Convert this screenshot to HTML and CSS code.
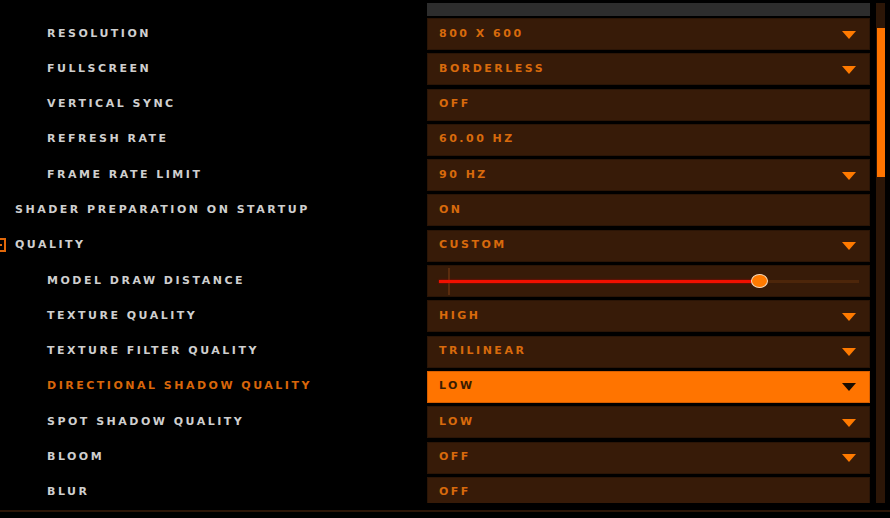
FILE: index.html
```html
<!DOCTYPE html>
<html>
<head>
<meta charset="utf-8">
<link rel="stylesheet" href="styles.css">
</head>
<body>
<div class="screen">
  <div class="main">
    <div class="list">
      <div class="stub-row"><div class="stub"></div></div>

      <div class="row"><div class="label sub">RESOLUTION</div><div class="box"><span class="val">800 X 600</span><span class="arrow"></span></div></div>
      <div class="row"><div class="label sub">FULLSCREEN</div><div class="box"><span class="val">BORDERLESS</span><span class="arrow"></span></div></div>
      <div class="row"><div class="label sub">VERTICAL SYNC</div><div class="box"><span class="val">OFF</span></div></div>
      <div class="row"><div class="label sub">REFRESH RATE</div><div class="box"><span class="val">60.00 HZ</span></div></div>
      <div class="row"><div class="label sub">FRAME RATE LIMIT</div><div class="box"><span class="val">90 HZ</span><span class="arrow"></span></div></div>
      <div class="row"><div class="label">SHADER PREPARATION ON STARTUP</div><div class="box"><span class="val">ON</span></div></div>
      <div class="row"><div class="label"><span class="toggle"></span>QUALITY</div><div class="box"><span class="val">CUSTOM</span><span class="arrow"></span></div></div>
      <div class="row"><div class="label sub">MODEL DRAW DISTANCE</div>
        <div class="box slider-box">
          <div class="slider">
            <span class="tick"></span>
            <span class="fill" style="width: 318px"></span>
            <span class="knob"></span>
            <span class="rest"></span>
          </div>
        </div>
      </div>
      <div class="row"><div class="label sub">TEXTURE QUALITY</div><div class="box"><span class="val">HIGH</span><span class="arrow"></span></div></div>
      <div class="row"><div class="label sub">TEXTURE FILTER QUALITY</div><div class="box"><span class="val">TRILINEAR</span><span class="arrow"></span></div></div>
      <div class="row active"><div class="label sub">DIRECTIONAL SHADOW QUALITY</div><div class="box"><span class="val">LOW</span><span class="arrow"></span></div></div>
      <div class="row"><div class="label sub">SPOT SHADOW QUALITY</div><div class="box"><span class="val">LOW</span><span class="arrow"></span></div></div>
      <div class="row"><div class="label sub">BLOOM</div><div class="box"><span class="val">OFF</span><span class="arrow"></span></div></div>
      <div class="row"><div class="label sub">BLUR</div><div class="box"><span class="val">OFF</span></div></div>
    </div>
    <div class="scrollbar"><div class="thumb"></div></div>
  </div>
  <div class="bottom-line"></div>
</div>
</body>
</html>
```

FILE: styles.css
```css
* { box-sizing: border-box; }
html, body { margin: 0; padding: 0; background: #000; }
body {
  width: 890px;
  height: 518px;
  overflow: hidden;
  font-family: "DejaVu Sans", "Liberation Sans", sans-serif;
  font-weight: bold;
  font-size: 11px;
  letter-spacing: 2.5px;
}
.screen {
  width: 890px;
  height: 518px;
  display: flex;
  flex-direction: column;
}
.main {
  display: flex;
  margin-top: 3px;
  height: 500px;
}
.list {
  width: 870px;
  height: 500px;
  overflow: hidden;
  display: flex;
  flex-direction: column;
}
.stub-row {
  height: 13px;
  flex: none;
  padding-left: 427px;
}
.stub {
  height: 13px;
  background: #2d2d2d;
}
.row {
  flex: none;
  height: 35.3px;
  display: grid;
  grid-template-columns: 427px 443px;
  padding-top: 2px;
}
.label {
  height: 32px;
  display: flex;
  align-items: center;
  padding-left: 15px;
  padding-bottom: 2px;
  color: #cfcfcf;
  white-space: nowrap;
}
.label.sub { padding-left: 47px; }
.toggle {
  flex: none;
  width: 14px;
  height: 14px;
  margin-left: -23px;
  margin-right: 9px;
  margin-bottom: -1px;
  border: 2px solid #e0680a;
  display: flex;
  align-items: center;
  justify-content: center;
}
.toggle::after {
  content: "";
  width: 6px;
  height: 2px;
  background: #e0680a;
}
.box {
  height: 32px;
  background: #371b08;
  border: 1px solid #2b1506;
  display: flex;
  align-items: center;
  justify-content: space-between;
  padding: 0 13px 0 11px;
}
.val {
  color: #d86a0c;
  padding-bottom: 2px;
}
.arrow {
  width: 0;
  height: 0;
  border-left: 7px solid transparent;
  border-right: 7px solid transparent;
  border-top: 8px solid #ff7a00;
  margin-top: 1px;
}
.row.active .label { color: #d8660a; }
.row.active .box {
  background: #ff7400;
  border-color: #d85f00;
}
.row.active .val { color: #3a1c00; }
.row.active .arrow { border-top-color: #1a0c00; }

.slider-box { padding: 0 10px 0 11px; }
.slider {
  position: relative;
  flex: 1;
  height: 28px;
  display: flex;
  align-items: center;
}
.tick {
  position: absolute;
  left: 9px;
  top: 1px;
  width: 2px;
  height: 27px;
  background: #5a2c0e;
}
.fill {
  flex: none;
  height: 3px;
  background: #f01000;
  box-shadow: 0 0 2px #c00000;
  position: relative;
}
.knob {
  flex: none;
  width: 17px;
  height: 14px;
  border-radius: 50%;
  background: #ff7a00;
  border: 1.5px solid #f6d8b8;
  margin-left: -6px;
  margin-right: -3px;
  position: relative;
  z-index: 2;
}
.rest {
  flex: 1;
  height: 3px;
  background: #4d260a;
}
.scrollbar {
  margin-left: 6px;
  width: 9px;
  height: 500px;
  background: #2c1607;
  padding-top: 25px;
}
.thumb {
  width: 8px;
  margin-left: 0.5px;
  height: 149px;
  background: #ff7400;
}
.bottom-line {
  margin-top: 7px;
  height: 2px;
  background: #2e1608;
}
```
